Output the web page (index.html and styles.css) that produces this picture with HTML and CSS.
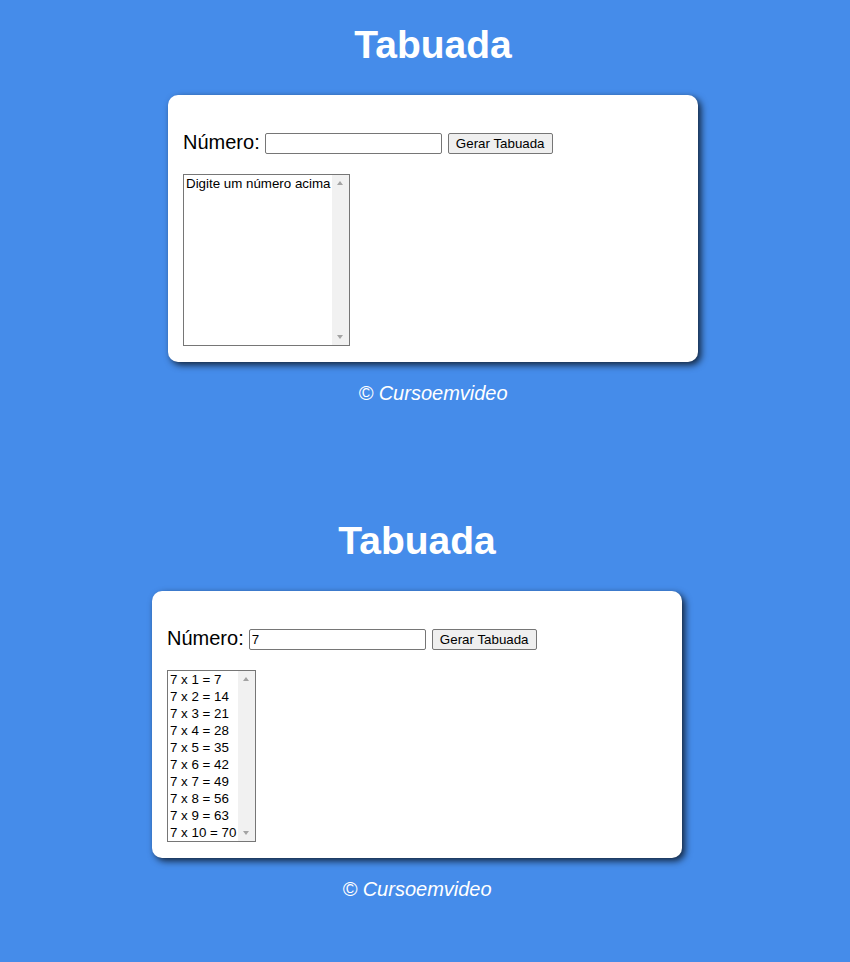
FILE: index.html
```html
<!DOCTYPE html>
<html lang="pt-BR">
<head>
<meta charset="utf-8">
<title>Tabuada</title>
<link rel="stylesheet" href="styles.css">
</head>
<body>
<section class="page page-a">
  <header><h1>Tabuada</h1></header>
  <main class="card">
    <div class="row">
      <label class="lbl" for="n1">Número:</label>
      <input class="txt" id="n1" type="text">
      <button class="btn" type="button">Gerar Tabuada</button>
    </div>
    <div class="list list-a">
      <div class="items">
        <div class="opt">Digite um número acima</div>
      </div>
      <div class="sb"><span class="up"></span><span class="down"></span></div>
    </div>
  </main>
  <footer class="foot">&copy; Cursoemvideo</footer>
</section>
<section class="page page-b">
  <header><h1>Tabuada</h1></header>
  <main class="card">
    <div class="row">
      <label class="lbl" for="n2">Número:</label>
      <input class="txt" id="n2" type="text" value="7">
      <button class="btn" type="button">Gerar Tabuada</button>
    </div>
    <div class="list list-b">
      <div class="items">
        <div class="opt">7 x 1 = 7</div>
        <div class="opt">7 x 2 = 14</div>
        <div class="opt">7 x 3 = 21</div>
        <div class="opt">7 x 4 = 28</div>
        <div class="opt">7 x 5 = 35</div>
        <div class="opt">7 x 6 = 42</div>
        <div class="opt">7 x 7 = 49</div>
        <div class="opt">7 x 8 = 56</div>
        <div class="opt">7 x 9 = 63</div>
        <div class="opt">7 x 10 = 70</div>
      </div>
      <div class="sb"><span class="up"></span><span class="down"></span></div>
    </div>
  </main>
  <footer class="foot">&copy; Cursoemvideo</footer>
</section>
</body>
</html>
```
FILE: styles.css
```css
html, body {
  margin: 0;
  padding: 0;
}
body {
  background: #458cea;
  font-family: "Liberation Sans", Arial, sans-serif;
  width: 850px;
  height: 962px;
  overflow: hidden;
}
.page {
  height: 496px;
  display: flex;
  flex-direction: column;
  align-items: center;
  box-sizing: border-box;
}
.page-a { padding-left: 16px; }
.page-b { padding-right: 16px; }
h1 {
  margin: 0;
  padding-top: 23px;
  height: 95px;
  box-sizing: border-box;
  font-size: 39px;
  line-height: 44px;
  font-weight: bold;
  color: #fff;
  text-align: center;
}
.card {
  width: 530px;
  height: 267px;
  box-sizing: border-box;
  background: #fff;
  border-radius: 10px;
  box-shadow: 3px 3px 7px rgba(0, 0, 0, 0.75);
  padding: 38px 15px 16px;
}
.row {
  display: flex;
  align-items: center;
  height: 21px;
}
.lbl {
  font-size: 20px;
  color: #000;
  margin-right: 5px;
  line-height: 21px;
  position: relative;
  top: -1px;
}
.txt {
  width: 177px;
  height: 21px;
  box-sizing: border-box;
  border: 1px solid #767676;
  border-radius: 2px;
  padding: 1px 2px;
  margin: 0 6px 0 0;
  font: 13.33px "Liberation Sans", Arial, sans-serif;
  color: #000;
  background: #fff;
}
.btn {
  height: 21px;
  width: 105px;
  box-sizing: border-box;
  border: 1px solid #767676;
  border-radius: 2px;
  background: #efefef;
  padding: 0 6px;
  margin: 0;
  font: 13.33px "Liberation Sans", Arial, sans-serif;
  color: #000;
}
.list {
  margin-top: 20px;
  height: 172px;
  box-sizing: border-box;
  border: 1px solid #767676;
  display: flex;
  background: #fff;
}
.list-a { width: 167px; }
.list-b { width: 89px; }
.items {
  flex: 1;
  padding-left: 2px;
  font-size: 13.33px;
  line-height: 17px;
  color: #000;
  white-space: nowrap;
}
.sb {
  width: 17px;
  background: #f1f1f1;
  position: relative;
}
.up, .down {
  position: absolute;
  left: 5px;
  width: 0;
  height: 0;
  border-left: 3.5px solid transparent;
  border-right: 3.5px solid transparent;
}
.up {
  top: 6px;
  border-bottom: 4px solid #a3a3a3;
}
.down {
  bottom: 6px;
  border-top: 4px solid #a3a3a3;
}
.foot {
  margin-top: 20px;
  font-size: 20px;
  font-style: italic;
  color: #fff;
  line-height: 23px;
}
```
